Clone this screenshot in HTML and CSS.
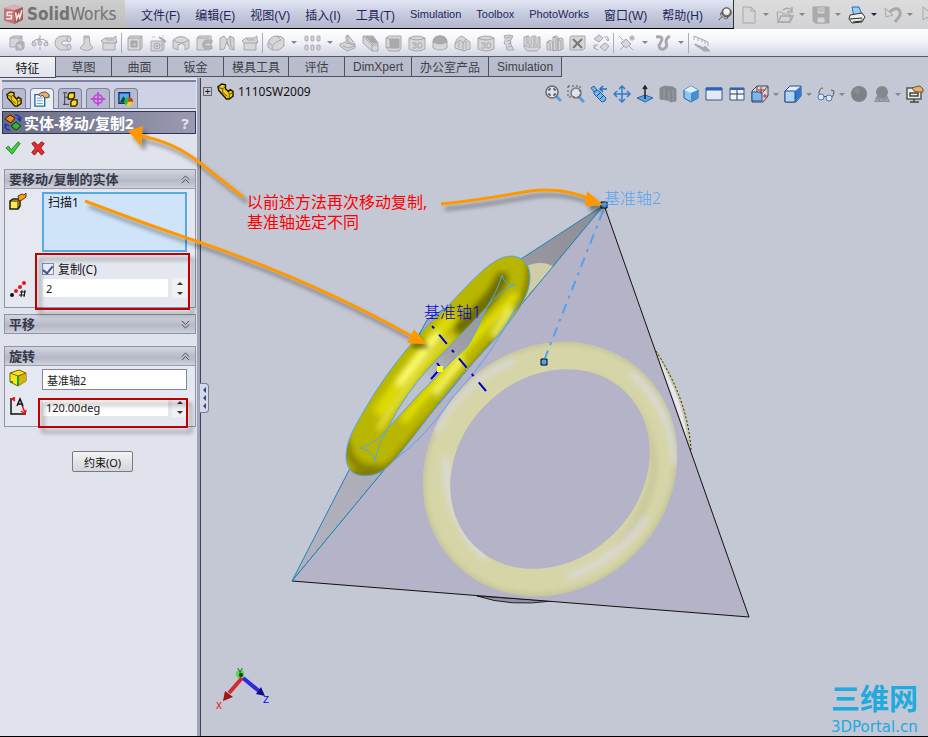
FILE: index.html
```
<!DOCTYPE html>
<html lang="zh-CN">
<head>
  <meta charset="utf-8">
  <title>SolidWorks</title>
  <meta name="viewport" content="width=device-width,initial-scale=1">
  <link rel="stylesheet" href="styles.css">
</head>
<body>
<svg class="sprite" aria-hidden="true">
  <defs>
    <!-- feature toolbar -->
    <symbol id="boss" viewBox="0 0 18 18"><path d="M2 4l3-2h9v9l-2 2H2z"/><path d="M2 4h10v9M12 4l2-2" fill="none"/><path d="M8 10l2-2h6v6l-2 2H8z" fill="#b9b9bd"/><path d="M8 10h6v6M14 10l2-2"/></symbol>
    <symbol id="revolve" viewBox="0 0 18 18"><path d="M9 1v16" stroke-dasharray="3 1"/><path d="M1 8q8-6 16 0M6 6l3-2M6 6l3 2" fill="none"/><circle cx="3" cy="10" r="2"/><circle cx="15" cy="10" r="2"/><circle cx="9" cy="9" r="2"/></symbol>
    <symbol id="sweep" viewBox="0 0 18 18"><path d="M15 2H8a6 6 0 0 0 0 14h7v-5H9q-3-2 0-4h6z"/><ellipse cx="15" cy="5" rx="2" ry="3"/><ellipse cx="15" cy="13" rx="2" ry="3"/></symbol>
    <symbol id="loft" viewBox="0 0 18 18"><path d="M7 2h5l1 8 3 4q-7 5-13 0l4-4z"/><path d="M7 3q2 2 5 0" fill="none"/></symbol>
    <symbol id="rib" viewBox="0 0 18 18"><path d="M1 7l4-3h8l3-2v4l1 2-2 2v6H3V9z"/><path d="M3 9h12l2-2M5 4l2 2h7" fill="none"/></symbol>
    <symbol id="cut" viewBox="0 0 18 18"><path d="M2 4l2-2h12v12l-2 2H2z"/><path d="M2 4h12v12M14 4l2-2" fill="none"/><path d="M5 7h6v6H5z" fill="#aaa"/><path d="M7 9h3v3H7z"/></symbol>
    <symbol id="wizard" viewBox="0 0 18 18"><path d="M2 7h11v10H2zM13 7l2-2v10l-2 2"/><circle cx="8" cy="12" r="3"/><circle cx="8" cy="12" r="1"/><path d="M10 3l7 5" stroke-width="2"/><path d="M3 3h3M14 1v3" stroke-dasharray="1 1"/></symbol>
    <symbol id="dome" viewBox="0 0 18 18"><path d="M1 6q8-7 16 0v8l-4 2v-5q-4-3-7 0v5l-5-2z"/><path d="M1 6q8 6 16 0" fill="none"/></symbol>
    <symbol id="shell" viewBox="0 0 18 18"><path d="M2 4l2-2h12v12l-2 2H2z"/><path d="M17 6H10q-5 5 0 9h7v-3h-6q-2-1 0-3h6z" fill="#b5b5b9"/><path d="M2 4h12" fill="none"/></symbol>
    <symbol id="draft" viewBox="0 0 18 18"><path d="M2 4l4-2 3 4 3-4 4 2v12l-4-1-3-7-3 7-4 1z"/><path d="M9 6v5M12 2l1 10 3 4" fill="none"/></symbol>
    <symbol id="fillet" viewBox="0 0 18 18"><path d="M1 9q2-7 9-7 5 0 7 3v7l-5 4H5l-4-3z"/><path d="M5 16q-1-7 9-10M1 9l4 2M10 2l4 4" fill="none"/></symbol>
    <symbol id="pattern" viewBox="0 0 18 18"><rect x="2" y="2" width="3" height="5" rx="1"/><rect x="8" y="2" width="3" height="5" rx="1"/><rect x="14" y="2" width="3" height="5" rx="1"/><rect x="2" y="11" width="3" height="5" rx="1"/><rect x="8" y="11" width="3" height="5" rx="1"/><rect x="14" y="11" width="3" height="5" rx="1"/></symbol>
    <symbol id="ribs" viewBox="0 0 18 18"><path d="M1 10l6-2V2l2-1 7 9v4l-8 3-7-5z"/><path d="M7 9l9 2M9 2v6l7 3M4 12l5 2 7-2" fill="none"/></symbol>
    <symbol id="wedge" viewBox="0 0 18 18"><path d="M1 2h10l5 7v8h-6L1 9z"/><path d="M1 2l9 9h6M10 11v6" fill="none"/><path d="M4 3h7l4 6h-5z" fill="#aaa"/></symbol>
    <symbol id="box" viewBox="0 0 18 18"><path d="M1 4l3-2h12v12l-2 3H4l-3-4z"/><path d="M5 5h9v9H5z" fill="#aaa"/><path d="M1 4l4 1M5 14l-4-1" fill="none"/></symbol>
    <symbol id="wrap" viewBox="0 0 18 18"><path d="M1 4q8-4 16 0v11q-8 4-16 0z"/><path d="M1 4q8 4 16 0M4 9h4v5H4M5 11h3M10 9h3l1 2v1l-1 2h-3z" fill="none"/></symbol>
    <symbol id="cap" viewBox="0 0 18 18"><path d="M2 8q0-6 7-6t7 6v6q-7 4-14 0z"/><path d="M2 8q7 4 14 0-1-6-7-6T2 8" fill="#aaa"/></symbol>
    <symbol id="split" viewBox="0 0 18 18"><path d="M1 10q1-6 7-8l8 6v7l-6 2-9-3z"/><path d="M1 10l5-4 3 3 3-4M5 8v6M9 9v7M12 7v8" fill="none"/></symbol>
    <symbol id="flex" viewBox="0 0 18 18"><path d="M4 2q5-2 9 0-4 5-2 9l3 5H7q0-5-3-7 3-3 0-7z"/><path d="M6 4l5-1M7 7l4-1M8 10l3-1M8 13l4-1" fill="none"/></symbol>
    <symbol id="indent" viewBox="0 0 18 18"><path d="M1 3l3-1h2v9h2V3l2-1h3v9h2V3h2v11l-3 3H4l-3-4z"/><path d="M1 11l4 2h12M4 2v9M11 3v9" fill="none"/></symbol>
    <symbol id="combine" viewBox="0 0 18 18"><path d="M1 8l3-2 3 2v8H1zM7 3l3-1 2 1v13l-5 1zM12 5l3-1 2 1v10l-5 2z"/><path d="M1 8l3 1v7M7 3l3 1v12M12 5l3 2v9" fill="none"/></symbol>
    <symbol id="delete" viewBox="0 0 18 18"><path d="M1 3l2-1h13v12l-2 2H1z"/><path d="M4 5l9 9M13 5l-9 9" fill="none" stroke="#777" stroke-width="2"/></symbol>
    <symbol id="movecopy" viewBox="0 0 18 18"><path d="M2 5l5-4 4 3-4 4zM8 13l5-4 4 3-4 5z"/><path d="M12 3h4v4M14 5l2 2 1-2M6 11H2v3l4 2M4 12l-2 2" fill="none"/></symbol>
    <symbol id="refgeo" viewBox="0 0 18 18"><path d="M3 9l5-4 5 5-5 4z"/><path d="M1 2l4 4M2 16l4-4M11 12l4 4M11 4h6M14 1v6M12 2l4 4M16 2l-4 4" fill="none"/></symbol>
    <symbol id="curve" viewBox="0 0 18 18"><path d="M2 3q6-1 6 2-1 4-3 6 0 5 5 4 4-2 2-7 0-4 4-6" fill="none" stroke-width="3"/></symbol>
    <symbol id="instant" viewBox="0 0 18 18"><path d="M1 2l14 6v4M1 2v4M5 4v3M9 5v3M12 7v3" fill="none"/><path d="M2 10l9 4 1-2 5 5h-7v-1l-8-5z" fill="#aaa"/></symbol>
    <!-- document toolbar -->
    <symbol id="new" viewBox="0 0 18 18"><path d="M3 1h8l4 4v12H3z"/><path d="M11 1v4h4" fill="none"/></symbol>
    <symbol id="open" viewBox="0 0 18 18"><path d="M1 6h5l1 2h7v8H2z"/><path d="M2 16l3-6h12l-3 6zM7 4q5-4 9 1M16 1v5h-5" fill="none" stroke-width="1.5"/></symbol>
    <symbol id="save" viewBox="0 0 18 18"><path d="M1 1h16v16H3l-2-2z" fill="#aaa"/><path d="M5 1h8v7H5zM5 11h8v6H5zM6 3h6M6 5h6"/></symbol>
    <symbol id="print" viewBox="0 0 18 18"><path d="M4 1h7l3 8-8 2z" fill="#9accf5" stroke="#2d6db5"/><path d="M2 9l12-2 3 4-3 5-10 1-3-4z" fill="#eee" stroke="#333"/><path d="M2 13l12-1M5 16l9-1" stroke="#222"/><circle cx="14" cy="13" r="1" fill="#5c5" stroke="none"/></symbol>
    <symbol id="undo" viewBox="0 0 18 18"><path d="M5 7q4-5 9-4 4 3 1 8l-4 5" fill="none" stroke-width="3"/><path d="M1 2l1 9 7-2z"/></symbol>
    <symbol id="cursor" viewBox="0 0 18 18"><path d="M3 1v13l4-3 3 6 3-1-3-6h5z"/></symbol>
    <symbol id="pin" viewBox="0 0 18 18"><path d="M1 17l5-6" stroke="#333" fill="none"/><path d="M3 8q3-1 10 6-2 3-6 0T3 8z" fill="#ddd" stroke="#444"/><circle cx="11" cy="7" r="6" fill="#777" stroke="#333"/><circle cx="11" cy="6" r="4" fill="#f5f5f5"/></symbol>
    <!-- panel -->
    <symbol id="part" viewBox="0 0 18 18"><path d="M1 4l4-3 4 1v4l3 3 2-2 3 2v5l-4 3h-3L2 8z" fill="#f5cd14" stroke="#1a1400" stroke-width="1.5"/><path d="M2 5l4 1v4M6 6l3-2M6 10l5 4M12 9l1 3 4-2M13 12v4" fill="none" stroke="#5c4700"/></symbol>
    <symbol id="property" viewBox="0 0 18 18"><path d="M1 4h11v13H1z" fill="#fff" stroke="#176ab2" stroke-width="1.5"/><path d="M3 8h7M3 11h7M3 14h7" stroke="#4b9ce0"/><path d="M5 4q3-3 8-3l4 3v3l-5 1-2-3-3 1z" fill="#e3b078" stroke="#51351c"/></symbol>
    <symbol id="config" viewBox="0 0 18 18"><path d="M1 2h5M3 2v13h5M3 7h5M1 15h3" stroke="#333" fill="none"/><path d="M7 4l2-2h5v5l-2 2H7zM10 12l2-2h5v5l-2 2h-5z" fill="#ffdc1c" stroke="#2b2200" stroke-width="1.5"/></symbol>
    <symbol id="dim" viewBox="0 0 18 18"><circle cx="9" cy="9" r="5" fill="none" stroke="#c24ad8" stroke-width="2"/><path d="M9 1v16M1 9h16" stroke="#c24ad8" stroke-width="2"/></symbol>
    <symbol id="display" viewBox="0 0 18 18"><path d="M1 2h12v12H1z" fill="#55aaf4" stroke="#16306c" stroke-width="1.5"/><path d="M2 13l4-7 3 4 3-3v6z" fill="#174a24"/><circle cx="12" cy="12" r="5" fill="#37b53c"/><path d="M12 12V7a5 5 0 0 1 5 5z" fill="#e42f20"/><path d="M12 12h5a5 5 0 0 1-8 4z" fill="#f3d02e"/></symbol>
    <symbol id="movebody" viewBox="0 0 18 18"><path d="M1 5l5-4 5 3-4 5z" fill="#f28a22" stroke="#3c1c00"/><path d="M7 12l5-4 5 4-5 4z" fill="#32b53b" stroke="#063c0c"/><path d="M11 1q5 0 5 5M13 4l3 3 1-4M1 11q0 5 5 5M1 10l4 2M1 10v4" fill="none" stroke="#1838b8" stroke-width="1.5"/></symbol>
    <symbol id="ok" viewBox="0 0 18 18"><path d="M1 9l3-2 3 4 8-9 2 2-9 12z" fill="#42d43e" stroke="#187c1c"/></symbol>
    <symbol id="cancel" viewBox="0 0 18 18"><path d="M2 4l3-2 4 4 4-4 3 2-4 5 4 5-3 3-4-5-4 5-3-3 4-5z" fill="#e62b2b" stroke="#8b1015"/></symbol>
    <symbol id="body" viewBox="0 0 18 18"><path d="M1 9l3-2h7v7l-2 3H1z" fill="#ffe45c" stroke="#221c00" stroke-width="1.5"/><path d="M1 9h8v8M9 9l2-2" fill="none" stroke="#221c00"/><path d="M9 4l4-2 2 1 2-2v4l-4 3-3 1z" fill="#f79b21" stroke="#663800"/></symbol>
    <symbol id="count" viewBox="0 0 18 18"><circle cx="3" cy="15" r="2" fill="#111"/><circle cx="7" cy="11" r="2" fill="#e11"/><circle cx="11" cy="7" r="2" fill="#e11"/><circle cx="15" cy="3" r="2" fill="#e11"/><path d="M13 10l-1 7M16 10l-1 7M11 12h6M10 15h6" stroke="#111"/></symbol>
    <symbol id="cube" viewBox="0 0 18 18"><path d="M1 4l9-3 7 3v8l-8 5-8-4z" fill="#ffe21c" stroke="#756300"/><path d="M9 7l8-3v8l-8 5z" fill="#d3b20a"/><path d="M1 4l8 3 8-3" fill="none" stroke="#756300"/><path d="M9 7v10M1 13h3" stroke="#12a31c" stroke-width="2"/></symbol>
    <symbol id="angle" viewBox="0 0 18 18"><path d="M2 1v16h15" fill="none" stroke="#111" stroke-width="1.5"/><path d="M2 2h4M3 2l3-2M3 2l3 2M13 8l3 8M12 14l4 3 1-4" fill="none" stroke="#e11" stroke-width="1.5"/><path d="M8 9l3-7 3 7M9 7h4" fill="none" stroke="#111" stroke-width="1.5"/></symbol>
    <symbol id="up" viewBox="0 0 10 10"><path d="M1 5l4-4 4 4M1 9l4-4 4 4" fill="none"/></symbol>
    <symbol id="down" viewBox="0 0 10 10"><path d="M1 1l4 4 4-4M1 5l4 4 4-4" fill="none"/></symbol>
    <!-- view toolbar -->
    <symbol id="zoomfit" viewBox="0 0 18 18"><path d="M12 11l5 5" stroke="#5d9be0" stroke-width="3"/><circle cx="8" cy="7" r="6" fill="#dde2ec" stroke="#66686f" stroke-width="1.5"/><path d="M5 6V4h2M9 4h2v2M11 8v2H9M7 10H5V8" stroke="#222" fill="none"/></symbol>
    <symbol id="zoomarea" viewBox="0 0 18 18"><path d="M12 12l5 5" stroke="#5d9be0" stroke-width="3"/><circle cx="9" cy="8" r="5" fill="#dde2ec" stroke="#777" stroke-width="1.5"/><path d="M1 1h12v11H1z" fill="none" stroke="#555" stroke-dasharray="2 2"/></symbol>
    <symbol id="prev" viewBox="0 0 18 18"><path d="M1 3l3-2 3 4 2 1 7 7-1 3-3 1-8-8v-2z" fill="#75b5ee" stroke="#2863a8"/><path d="M4 7l3-2M7 11l4-4M10 14l4-4" stroke="#184b85"/><path d="M10 4h7M13 1l-3 3 3 3" stroke="#216dc6" stroke-width="1.5" fill="none"/></symbol>
    <symbol id="pan" viewBox="0 0 18 18"><path d="M9 1v16M1 9h16M6 4l3-3 3 3M6 14l3 3 3-3M4 6L1 9l3 3M14 6l3 3-3 3" fill="none" stroke="#347ccb" stroke-width="1.5"/></symbol>
    <symbol id="normal" viewBox="0 0 18 18"><path d="M1 13l8-3 8 3-8 4z" fill="#5ba5e5" stroke="#2865a5"/><path d="M9 14V2M7 4l2-3 2 3" stroke="#222" fill="none" stroke-width="1.5"/></symbol>
    <symbol id="section" viewBox="0 0 18 18"><path d="M1 3l5-2 8 1 3 2v12l-5 1-4-2-7-1z" fill="#85888f" stroke="#8b8e96"/><path d="M5 3v11M10 5v11M14 5v11" stroke="#9a9da4"/></symbol>
    <symbol id="orient" viewBox="0 0 18 18"><path d="M2 5l7-4 7 4v8l-7 4-7-4z" fill="#8cc5f4" stroke="#235f9e"/><path d="M2 5l7 3 7-3-7-4z" fill="#d9efff"/><path d="M9 8v9l7-4V5z" fill="#438ed2"/></symbol>
    <symbol id="window" viewBox="0 0 18 18"><path d="M1 3h16v12H1z" fill="#e4e9f4" stroke="#39558d"/><path d="M1 4h16" stroke="#2863bc" stroke-width="3"/></symbol>
    <symbol id="fourview" viewBox="0 0 18 18"><path d="M2 3h14v12H2z" fill="#f2f4fa" stroke="#39558d"/><path d="M2 4h14" stroke="#2863bc" stroke-width="2"/><path d="M2 9h14M9 5v10" stroke="#303a4e"/></symbol>
    <symbol id="stdview" viewBox="0 0 18 18"><path d="M1 6l5-5h11v10l-5 6H1z" fill="#d2d7e3" stroke="#444"/><path d="M1 7h10v9H1z" fill="#7fb5ea" stroke="#214e8e"/><path d="M6 1v6M12 7l5-6" stroke="#444"/><path d="M10 2v7M7 5h7M14 9v4M12 11h5" stroke="#d42323"/></symbol>
    <symbol id="style" viewBox="0 0 18 18"><path d="M1 6l5-5h11v10l-5 6H1z" fill="#e5edfa" stroke="#2b4f88"/><path d="M11 6l6-5v10l-6 6z" fill="#2d78d0"/><path d="M1 6h10v11H1z" fill="#b4d3f4" stroke="#2b4f88"/></symbol>
    <symbol id="glasses" viewBox="0 0 18 18"><circle cx="4" cy="12" r="3" fill="#d6eafa" stroke="#54789c"/><circle cx="12" cy="13" r="3" fill="#d6eafa" stroke="#54789c"/><path d="M2 9q0-6 4-6M7 12q1-2 2 0M15 12q2-2 2-6l-3-1" fill="none" stroke="#555"/></symbol>
    <symbol id="ball" viewBox="0 0 18 18"><circle cx="9" cy="9" r="8" fill="#7e8188"/><circle cx="7" cy="6" r="3" fill="#898c93"/></symbol>
    <symbol id="scene" viewBox="0 0 18 18"><path d="M1 17l3-7h10l3 7z" fill="#8f929a"/><circle cx="9" cy="7" r="6" fill="#84878e"/><path d="M2 15h14" stroke="#a9acb5" stroke-dasharray="3 2"/></symbol>
    <symbol id="settings" viewBox="0 0 18 18"><path d="M1 3h14v11H1z" fill="#eee" stroke="#555" stroke-width="1.5"/><path d="M4 17h9M8 14v3M4 8h8v3H4z" stroke="#444" fill="none" stroke-width="1.5"/><path d="M6 3q5-2 8-2l3 3v3h-6L8 6z" fill="#e4af6d" stroke="#75502c"/></symbol>
  </defs>
</svg>

<div class="app">
  <header class="menubar">
    <div class="brand">
      <svg class="brand-logo" viewBox="0 0 20 20"><path d="M1 4l9-3 9 2v12l-8 4-10-3z" fill="#c07479"/><path d="M1 4l9-3 9 2-8 3z" fill="#dcb0b0"/><path d="M11 6l8-3v12l-8 4z" fill="#a85c60"/><path d="M9 8H4v3h4v3H3M12 8l1 6 2-4 1 3 2-7" fill="none" stroke="#f4e8e8" stroke-width="1.5"/></svg>
      <span class="brand-name">Solid<span class="brand-light">Works</span></span>
    </div>
    <nav class="menu">
      <a href="#">文件(F)</a>
      <a href="#">编辑(E)</a>
      <a href="#">视图(V)</a>
      <a href="#">插入(I)</a>
      <a href="#">工具(T)</a>
      <a href="#" class="latin">Simulation</a>
      <a href="#" class="latin">Toolbox</a>
      <a href="#" class="latin">PhotoWorks</a>
      <a href="#">窗口(W)</a>
      <a href="#">帮助(H)</a>
      <button class="pin" aria-label="固定"><svg><use href="#pin"/></svg></button>
    </nav>
    <div class="doc-tools gray">
      <button aria-label="新建"><svg><use href="#new"/></svg></button><i class="caret"></i>
      <button aria-label="打开"><svg><use href="#open"/></svg></button><i class="caret"></i>
      <button aria-label="保存"><svg><use href="#save"/></svg></button><i class="caret"></i>
      <button aria-label="打印"><svg><use href="#print"/></svg></button><i class="caret caret-dark"></i>
      <button aria-label="撤销"><svg><use href="#undo"/></svg></button><i class="caret"></i>
      <button aria-label="选择"><svg><use href="#cursor"/></svg></button>
    </div>
  </header>

  <div class="toolbar gray">
    <button aria-label="拉伸凸台"><svg><use href="#boss"/></svg></button>
    <button aria-label="旋转凸台"><svg><use href="#revolve"/></svg></button>
    <button aria-label="扫描"><svg><use href="#sweep"/></svg></button>
    <button aria-label="放样"><svg><use href="#loft"/></svg></button>
    <button aria-label="边界"><svg><use href="#rib"/></svg></button>
    <i class="sep"></i>
    <button aria-label="拉伸切除"><svg><use href="#cut"/></svg></button>
    <button aria-label="异型孔"><svg><use href="#wizard"/></svg></button>
    <button aria-label="旋转切除"><svg><use href="#dome"/></svg></button>
    <button aria-label="扫描切除"><svg><use href="#shell"/></svg></button>
    <button aria-label="放样切除"><svg><use href="#draft"/></svg></button>
    <button aria-label="边界切除"><svg><use href="#rib"/></svg></button>
    <i class="sep"></i>
    <button aria-label="圆角"><svg><use href="#fillet"/></svg></button><i class="caret"></i>
    <button aria-label="阵列"><svg><use href="#pattern"/></svg></button><i class="caret"></i>
    <button aria-label="筋"><svg><use href="#ribs"/></svg></button>
    <button aria-label="拔模"><svg><use href="#wedge"/></svg></button>
    <button aria-label="抽壳"><svg><use href="#box"/></svg></button>
    <button aria-label="包覆"><svg><use href="#wrap"/></svg></button>
    <button aria-label="圆顶"><svg><use href="#cap"/></svg></button>
    <button aria-label="分割"><svg><use href="#split"/></svg></button>
    <button aria-label="压凹"><svg><use href="#wrap"/></svg></button>
    <button aria-label="弯曲"><svg><use href="#flex"/></svg></button>
    <button aria-label="变形"><svg><use href="#indent"/></svg></button>
    <button aria-label="组合"><svg><use href="#combine"/></svg></button>
    <button aria-label="删除实体"><svg><use href="#delete"/></svg></button>
    <button aria-label="移动/复制"><svg><use href="#movecopy"/></svg></button>
    <i class="sep"></i>
    <button aria-label="参考几何体"><svg><use href="#refgeo"/></svg></button><i class="caret"></i>
    <button aria-label="曲线"><svg><use href="#curve"/></svg></button><i class="caret"></i>
    <i class="sep"></i>
    <button aria-label="Instant3D"><svg><use href="#instant"/></svg></button>
  </div>

  <div class="tabs">
    <button class="tab tab-active">特征</button>
    <button class="tab">草图</button>
    <button class="tab">曲面</button>
    <button class="tab">钣金</button>
    <button class="tab">模具工具</button>
    <button class="tab">评估</button>
    <button class="tab">DimXpert</button>
    <button class="tab">办公室产品</button>
    <button class="tab">Simulation</button>
  </div>

  <div class="workspace">
    <aside class="panel">
      <div class="panel-tabs">
        <button class="panel-tab" aria-label="设计树"><svg><use href="#part"/></svg></button>
        <button class="panel-tab panel-tab-active" aria-label="属性"><svg><use href="#property"/></svg></button>
        <button class="panel-tab" aria-label="配置"><svg><use href="#config"/></svg></button>
        <button class="panel-tab" aria-label="尺寸"><svg><use href="#dim"/></svg></button>
        <button class="panel-tab" aria-label="外观"><svg><use href="#display"/></svg></button>
      </div>
      <div class="panel-title">
        <svg><use href="#movebody"/></svg>
        <h1>实体-移动/复制2</h1>
        <button class="help">?</button>
      </div>
      <div class="confirm">
        <button aria-label="确定"><svg><use href="#ok"/></svg></button>
        <button aria-label="取消"><svg><use href="#cancel"/></svg></button>
      </div>

      <section class="group">
        <h2>要移动/复制的实体 <svg><use href="#up"/></svg></h2>
        <div class="group-body">
          <div class="field">
            <svg class="field-icon"><use href="#body"/></svg>
            <div class="selection" tabindex="0">扫描1</div>
          </div>
          <div class="field field-count">
            <svg class="field-icon"><use href="#count"/></svg>
            <div class="field-stack">
              <label class="check"><input type="checkbox" checked>复制(C)</label>
              <div class="spin">
                <input type="text" value="2" aria-label="复制数">
                <div class="spin-buttons"><button aria-label="增加"></button><button class="less" aria-label="减少"></button></div>
              </div>
            </div>
          </div>
        </div>
      </section>

      <section class="group">
        <h2>平移 <svg><use href="#down"/></svg></h2>
      </section>

      <section class="group group-rotate">
        <h2>旋转 <svg><use href="#up"/></svg></h2>
        <div class="group-body">
          <div class="field">
            <svg class="field-icon"><use href="#cube"/></svg>
            <input class="axis" type="text" value="基准轴2" aria-label="旋转轴">
          </div>
          <div class="field">
            <svg class="field-icon"><use href="#angle"/></svg>
            <div class="spin">
              <input type="text" value="120.00deg" aria-label="角度">
              <div class="spin-buttons"><button aria-label="增加"></button><button class="less" aria-label="减少"></button></div>
            </div>
          </div>
        </div>
      </section>

      <button class="constrain">约束(O)</button>
      <button class="splitter" aria-label="折叠面板"><svg viewBox="0 0 8 28"><path d="M6 3v6L3 6zM6 11v6l-3-3zM6 19v6l-3-3z" fill="#34408c"/></svg></button>
    </aside>

    <main class="viewport">
      <svg class="model">
        <defs>
          <filter id="soft" x="-20%" y="-20%" width="140%" height="140%"><feGaussianBlur stdDeviation="3"/></filter>
          <clipPath id="solid"><path d="M512 256C524 257 530 266 530 277C530 287 526 297 520 307C504 332 486 348 467 370C440 400 418 432 397 457C390 465 384 471 376 474C360 479 347 474 346 458C346 446 350 435 357 423C374 392 392 366 413 342C424 329 435 318 447 307C458 295 468 284 480 273C490 264 500 256 512 256Z"/></clipPath>
          <path id="ring" fill-rule="evenodd" d="M-134 0a134 120 0 1 0 268 0a134 120 0 1 0 -268 0zM-108 0a108 91 0 1 0 216 0a108 91 0 1 0 -216 0z"/>
          <clipPath id="ghost"><path clip-rule="evenodd" transform="translate(550 469) rotate(-45)" d="M-134 0a134 120 0 1 0 268 0a134 120 0 1 0 -268 0zM-108 0a108 91 0 1 0 216 0a108 91 0 1 0 -216 0z"/></clipPath>
          <linearGradient id="back" x1="0" y1="1" x2="1" y2="0"><stop offset="0" stop-color="#b2b2bd"/><stop offset=".5" stop-color="#aaaab7"/><stop offset="1" stop-color="#8d8b92"/></linearGradient>
          <linearGradient id="gap" x1="0" y1="1" x2="1" y2="0"><stop offset=".4" stop-color="#bec2ce"/><stop offset=".6" stop-color="#a4a3ae"/><stop offset="1" stop-color="#96949d"/></linearGradient>
        </defs>
        <g transform="translate(-201 -78)">
          <!-- slivers of the rings behind the solid -->
          <path d="M656 351Q688 400 691 450L672 395z" fill="#e9e7eb"/>
          <path d="M656 351Q687 400 690 450" fill="none" stroke="#c9c8a4" stroke-width="3"/>
          <path d="M656 351Q688 400 691 450" fill="none" stroke="#222" stroke-dasharray="2 2"/>
          <path d="M477 596Q510 607 552 601z" fill="#8f92a3" stroke="#222"/>
          <!-- pyramid faces -->
          <path d="M604 205L427 320 417 338 292 581z" fill="url(#back)" stroke="#1c84bd"/>
          <path d="M524 267Q542 259 554 267L520 309z" fill="#cfcea6"/>
          <path d="M530 292L540 284 523 305z" fill="#a9a98b"/>
          <path d="M604 205L292 581 749 617z" fill="#b5b3c7"/>
          <path d="M292 581L749 617 604 205" fill="none" stroke="#111"/>
          <path d="M604 205L292 581" stroke="#1c84bd"/>
          <!-- translucent ring -->
          <use href="#ring" transform="translate(550 469) rotate(-45)" fill="#d6d5a8"/>
          <g clip-path="url(#ghost)">
            <g fill="none" stroke-linecap="round" filter="url(#soft)">
              <ellipse cx="550" cy="469" rx="135" ry="121" transform="rotate(-45 550 469)" stroke="#b7b58c" stroke-width="4"/>
              <path d="M590 376Q646 396 654 462Q653 506 618 546" stroke="#c6c497" stroke-width="6"/>
              <path d="M436 430Q459 383 512 361" stroke="#dad9dc" stroke-width="6"/>
              <path d="M632 374Q672 408 675 462" stroke="#dcdbe4" stroke-width="5"/>
              <path d="M446 460Q446 518 484 556" stroke="#dcdbe2" stroke-width="6"/>
              <path d="M570 576Q618 558 644 520" stroke="#dad9dc" stroke-width="6"/>
            </g>
          </g>
          <!-- yellow ring -->
          <g clip-path="url(#solid)">
            <path d="M340 250h200v230H340z" fill="#b9b600"/>
            <g fill="none" stroke-linecap="round" filter="url(#soft)">
              <path d="M530 260Q534 290 510 325L395 462Q376 480 350 474" stroke="#7b7900" stroke-width="7"/>
              <path d="M460 328Q494 298 502 278" stroke="#6c6a00" stroke-width="12"/>
              <path d="M380 410L418 358 450 318" stroke="#dedc00" stroke-width="12"/>
              <path d="M400 382L437 336" stroke="#ffff78" stroke-width="7"/>
              <path d="M379 428L424 366 450 338" stroke="#f4f24f" stroke-width="4"/>
              <path d="M405 419L468 344 514 297" stroke="#e3e100" stroke-width="8"/>
              <path d="M436 393L462 361M494 335L511 310" stroke="#ffff7a" stroke-width="5"/>
              <path d="M346 442Q350 472 378 469" stroke="#827f00" stroke-width="8"/>
            </g>
            <path d="M388 428Q406 392 430 367L453 343 487 307Q475 335 467 347L453 360 440 373 420 393z" fill="url(#gap)"/>
          </g>
          <g fill="none" stroke="#55a4f3">
            <path d="M512 256C524 257 530 266 530 277C530 287 526 297 520 307C504 332 486 348 467 370C440 400 418 432 397 457C390 465 384 471 376 474C360 479 347 474 346 458C346 446 350 435 357 423C374 392 392 366 413 342C424 329 435 318 447 307C458 295 468 284 480 273C490 264 500 256 512 256Z"/>
            <path d="M388 428Q406 392 430 367L453 343 487 307Q475 335 467 347L453 360 440 373 420 393z"/>
            <path d="M487 307Q498 290 502 275Q504 285 515 285Q500 290 487 307M388 428Q378 442 360 448Q373 450 375 461Q378 443 388 428"/>
            <path d="M520 300Q492 356 453 397Q425 438 393 461"/>
          </g>
          <!-- reference axes -->
          <path d="M603 211L545 358" stroke="#4fa0f7" stroke-width="2" stroke-dasharray="10 6 3 6"/>
          <path d="M427 320L486 391" stroke="#0000c8" stroke-width="2" stroke-dasharray="0 8 3 8 12 0"/>
          <path d="M431 379l8-9M437 363l3 4" stroke="#0000c8" stroke-width="2"/>
          <path d="M437 366h6v6h-6z" fill="#ffff1c"/>
          <path d="M601 202h6v6h-6zM541 359h6v6h-6z" fill="#4fa0f7" stroke="#000"/>
          <text x="424" y="318" class="axis-label" fill="#0000d0">基准轴1</text>
          <text x="604" y="204" class="axis-label" fill="#55a4f3">基准轴2</text>
          <!-- triad -->
          <circle cx="240" cy="674" r="4" fill="#55d455"/>
          <path d="M242 678L229 693" stroke="#d42a2a" stroke-width="4"/>
          <path d="M223 701l2-10 8 6z" fill="#a11414"/>
          <path d="M243 678L259 691" stroke="#2c2cd8" stroke-width="4"/>
          <path d="M265 696l-9-2 5-7z" fill="#0c0c88"/>
          <circle cx="241" cy="675" r="2" fill="#143814"/>
          <text x="237" y="675" class="triad" fill="#087c08">Y</text>
          <text x="216" y="709" class="triad" fill="#f00">X</text>
          <text x="263" y="703" class="triad" fill="#00f">Z</text>
        </g>
      </svg>
      <div class="viewport-head">
        <div class="tree">
          <button class="expand" aria-label="展开">+</button>
          <svg><use href="#part"/></svg>
          <span>1110SW2009</span>
        </div>
        <div class="view-tools">
          <button aria-label="整屏显示"><svg><use href="#zoomfit"/></svg></button>
          <button aria-label="局部放大"><svg><use href="#zoomarea"/></svg></button>
          <button aria-label="上一视图"><svg><use href="#prev"/></svg></button>
          <button aria-label="平移"><svg><use href="#pan"/></svg></button>
          <button aria-label="正视于"><svg><use href="#normal"/></svg></button>
          <button aria-label="剖面"><svg><use href="#section"/></svg></button>
          <button aria-label="等轴测"><svg><use href="#orient"/></svg></button>
          <button aria-label="单一视图"><svg><use href="#window"/></svg></button>
          <button aria-label="四视图"><svg><use href="#fourview"/></svg></button>
          <button aria-label="视图定向"><svg><use href="#stdview"/></svg></button><i class="caret"></i>
          <button aria-label="显示样式"><svg><use href="#style"/></svg></button><i class="caret"></i>
          <button aria-label="隐藏/显示"><svg><use href="#glasses"/></svg></button><i class="caret"></i>
          <button aria-label="外观"><svg><use href="#ball"/></svg></button>
          <button aria-label="布景"><svg><use href="#scene"/></svg></button><i class="caret"></i>
          <button aria-label="视图设定"><svg><use href="#settings"/></svg></button>
        </div>
      </div>
      <div class="watermark">
        <strong>三维网</strong>
        <span>3DPortal.cn</span>
      </div>
    </main>
  </div>

  <!-- tutorial notes drawn over the window -->
  <svg class="notes">
    <defs>
      <filter id="shadow" x="-20%" y="-20%" width="140%" height="150%"><feDropShadow dx="4" dy="5" stdDeviation="2" flood-color="#000" flood-opacity=".4"/></filter>
    </defs>
    <g fill="none" stroke="#c00000" stroke-width="2" filter="url(#shadow)">
      <path d="M36 254h153v55H36z"/>
      <path d="M39 399h148v28H39z"/>
    </g>
    <g fill="none" stroke="#ff9800" stroke-width="3" filter="url(#shadow)">
      <path d="M243 197L200 163Q174 142 141 136"/>
      <path d="M85 201Q140 222 190 239Q310 279 413 337"/>
      <path d="M441 204Q480 200 530 191Q562 187 590 199"/>
      <path d="M128 131l15-5-2 20zM426 344l-12-15-7 14zM603 205l-16-14-2 15z" fill="#ff9800" stroke="none"/>
    </g>
    <text class="note" x="247" y="208">以前述方法再次移动复制,</text>
    <text class="note" x="247" y="228">基准轴选定不同</text>
  </svg>
</div>
</body>
</html>
```
FILE: styles.css
```
* {
  box-sizing: border-box;
}
body {
  margin: 0;
  font-family: "Noto Sans", "Noto Sans CJK SC", sans-serif;
  font-size: 12px;
  color: #111;
}
button {
  margin: 0;
  padding: 0;
  border: none;
  background: none;
  font: inherit;
  color: inherit;
}
svg {
  display: block;
  width: 18px;
  height: 18px;
}
.sprite {
  position: absolute;
  width: 0;
  height: 0;
}
.app {
  position: relative;
  display: flex;
  flex-direction: column;
  min-height: 100vh;
  overflow: hidden;
  background: #c4c8d4;
  border-bottom: 1px solid #000;
}
.gray svg {
  fill: #d6d6d9;
  stroke: #a8a8ac;
}
.caret {
  flex: none;
  width: 13px;
  display: flex;
  justify-content: center;
}
.caret::after {
  content: "";
  border: 3px solid transparent;
  border-top-color: #85858c;
  border-bottom: none;
}
.caret-dark::after {
  border-top-color: #22224a;
}

/* menu bar */
.menubar {
  display: flex;
  height: 29px;
  background: #d8d8d9;
}
.brand {
  display: flex;
  align-items: center;
  gap: 3px;
  width: 125px;
  padding-left: 3px;
  background: linear-gradient(#cfcfcf, #bcbcbe);
  border-bottom: 1px solid #000;
}
.brand-logo {
  width: 21px;
  height: 21px;
}
.brand-name {
  font: bold 17px "DejaVu Sans Condensed", "DejaVu Sans", sans-serif;
  color: #737373;
}
.brand-light {
  font-weight: normal;
}
.menu {
  display: flex;
  align-items: center;
  gap: 15px;
  padding: 0 1px 0 16px;
  background: linear-gradient(#e2e5f4, #c9cde0 45%, #b3b7cc);
  border-right: 1px solid #333;
  border-bottom: 1px solid #000;
}
.menu a {
  font-family: "Liberation Sans", "Noto Sans CJK SC", sans-serif;
  color: #24245c;
  text-decoration: none;
  white-space: nowrap;
}
.menu .latin {
  font-size: 11px;
}
.pin svg {
  width: 14px;
  height: 16px;
}
.doc-tools {
  flex: 1 1 0;
  display: flex;
  align-items: center;
  padding-left: 3px;
  overflow: hidden;
  background: linear-gradient(#dcdcdc, #d2d3d6);
}
.doc-tools button {
  flex: none;
  width: 23px;
  padding-left: 3px;
}

/* feature toolbar */
.toolbar {
  display: flex;
  align-items: center;
  height: 28px;
  padding-left: 5px;
  background: linear-gradient(#fff, #f3f4fa 45%, #d2d4e2);
  border-bottom: 1px solid #555866;
}
.toolbar button {
  flex: none;
  width: 23px;
  padding-left: 3px;
}
.sep {
  width: 1px;
  height: 20px;
  margin: 0 1px;
  background: #aaabb5;
}

/* command tabs */
.tabs {
  display: flex;
  height: 21px;
}
.tab {
  min-width: 56px;
  height: 20px;
  padding: 0 8px;
  background: #b9bccd;
  border-right: 1px solid #4c5060;
  border-bottom: 1px solid #4c5060;
  font-family: "Liberation Sans", "Noto Sans CJK SC", sans-serif;
  font-size: 12px;
  color: #3f3f46;
}
.tab-active {
  height: 21px;
  background: linear-gradient(#f1f2f7, #e2e4ec);
  color: #111;
}

/* property panel */
.workspace {
  flex: 1;
  display: flex;
}
.panel {
  position: relative;
  flex: none;
  width: 201px;
  padding: 2px 4px 0 2px;
  background: #e0e3ec;
  border-right: 1px solid #3f4252;
  box-shadow: inset -3px 0 #a0a4b8;
}
.panel-tabs {
  display: flex;
  gap: 4px;
  height: 29px;
  padding-top: 6px;
  background: #cfd2e5;
  border-top: 2px solid #7e829c;
  border-bottom: 1px solid #7e829c;
}
.panel-tab {
  display: flex;
  align-items: center;
  justify-content: center;
  width: 24px;
  background: #b7bace;
  border: 1px solid #7d829b;
  border-bottom: none;
  border-radius: 4px 4px 0 0;
}
.panel-tab svg {
  width: 16px;
  height: 16px;
}
.panel-tab-active {
  height: 21px;
  background: #edeff6;
}
.panel-title {
  display: flex;
  align-items: center;
  gap: 2px;
  height: 23px;
  margin-top: 2px;
  padding-left: 1px;
  background: linear-gradient(90deg, #686a82, #9a9bb2);
  border: 1px solid #32345a;
}
.panel-title h1 {
  flex: 1;
  margin: 0;
  font-size: 15px;
  line-height: 20px;
  color: #fff;
}
.help {
  width: 20px;
  font-size: 15px;
  font-weight: bold;
  line-height: 20px;
  color: #e6e6ee;
}
.confirm {
  display: flex;
  gap: 9px;
  padding: 6px 3px 13px;
}
.confirm svg {
  width: 16px;
  height: 16px;
}
.group {
  margin: 0 0 6px 2px;
  background: #e6e8f1;
  border: 1px solid #8f93a9;
}
.group h2 {
  display: flex;
  align-items: center;
  justify-content: space-between;
  height: 18px;
  margin: 0;
  padding: 0 5px 0 4px;
  background: linear-gradient(#d3d5de, #b5b8c6 60%, #cfd1da);
  font-size: 13px;
  line-height: 18px;
  color: #34384a;
}
.group h2 svg {
  width: 9px;
  height: 9px;
  stroke: #444a5c;
}
.group-body {
  display: flex;
  flex-direction: column;
  gap: 7px;
  padding: 3px 8px 7px 4px;
  border-top: 1px solid #9a9db0;
}
.group-rotate {
  margin-top: 12px;
}
.field {
  display: flex;
  gap: 15px;
}
.field-icon {
  flex: none;
}
.field-count .field-icon {
  margin-top: 21px;
}
.field-stack {
  flex: 1;
  min-width: 0;
}
.selection {
  flex: 1;
  height: 60px;
  padding: 0 4px;
  background: #cfe4f8;
  border: 2px solid #55a9e4;
  line-height: 18px;
}
.check {
  display: flex;
  align-items: center;
  gap: 4px;
  height: 19px;
}
.check input {
  appearance: none;
  display: flex;
  justify-content: center;
  width: 12px;
  height: 12px;
  margin: 0;
  background: #e8ecf4;
  border: 1px solid #8a8f9e;
}
.check input:checked::after {
  content: "";
  width: 4px;
  height: 8px;
  border: solid #3c5596;
  border-width: 0 2px 2px 0;
  transform: rotate(40deg);
}
.spin {
  flex: 1;
  display: flex;
  gap: 3px;
  min-width: 0;
  height: 22px;
}
input[type="text"] {
  width: 100%;
  min-width: 0;
  padding: 0 3px;
  background: #fff;
  border: 1px solid #e3e6ee;
  font-family: inherit;
  font-size: 11px;
  color: #222;
}
.spin input {
  flex: 1;
  height: 20px;
}
.spin-buttons {
  flex: none;
  display: flex;
  flex-direction: column;
  width: 15px;
  height: 20px;
}
.spin-buttons button {
  flex: 1;
  display: flex;
  align-items: center;
  justify-content: center;
  background: #f0f1f5;
}
.spin-buttons button::after {
  content: "";
  border: 3px solid transparent;
  border-bottom-color: #333;
  border-top: none;
}
.spin-buttons .less::after {
  border-top: 3px solid #333;
  border-bottom: none;
}
.field .axis {
  flex: 1;
  height: 21px;
  padding: 0 4px;
  border-color: #80869c;
}
.constrain {
  display: block;
  width: 61px;
  height: 21px;
  margin: 24px auto 0 70px;
  background: linear-gradient(#f3f3f5, #d5d6da);
  border: 1px solid #777b88;
  border-radius: 2px;
  font-size: 11px;
}
.splitter {
  position: absolute;
  left: 200px;
  top: 305px;
  z-index: 1;
  background: #d5d8e6;
  border: 1px solid #777c99;
  border-left: none;
  border-radius: 0 4px 4px 0;
}
.splitter svg {
  width: 8px;
  height: 28px;
}

/* graphics area */
.viewport {
  position: relative;
  flex: 1;
  display: flex;
  flex-direction: column;
  justify-content: space-between;
  min-width: 0;
}
.model {
  position: absolute;
  left: 0;
  top: 0;
  width: 100%;
  height: 100%;
}
.viewport-head {
  position: relative;
  display: flex;
  justify-content: space-between;
  padding: 4px 2px 0;
}
.tree {
  display: flex;
  align-items: center;
  height: 18px;
}
.tree svg {
  width: 17px;
  height: 17px;
}
.expand {
  display: flex;
  align-items: center;
  justify-content: center;
  width: 9px;
  height: 9px;
  margin-right: 5px;
  border: 1px solid #666;
  font-size: 10px;
  line-height: 7px;
}
.tree span {
  margin-left: 4px;
}
.view-tools {
  display: flex;
  align-items: center;
  height: 24px;
}
.view-tools button {
  width: 23px;
  padding-left: 3px;
}
.view-tools .caret {
  width: 10px;
}
.watermark {
  position: relative;
  display: flex;
  flex-direction: column;
  align-self: flex-end;
  padding-right: 10px;
  color: #22a9df;
}
.watermark strong {
  font-family: "Noto Sans CJK SC", sans-serif;
  font-size: 29px;
  line-height: 42px;
}
.watermark span {
  font: 15px/18px "DejaVu Sans", sans-serif;
}
.axis-label {
  font-size: 16px;
  font-weight: 300;
}
.triad {
  font: 10px "Liberation Mono", monospace;
}

/* annotations */
.notes {
  position: absolute;
  left: 0;
  top: 0;
  width: 100%;
  height: 100%;
  z-index: 2;
  pointer-events: none;
}
.note {
  font-size: 16px;
  fill: #f00;
}
```
